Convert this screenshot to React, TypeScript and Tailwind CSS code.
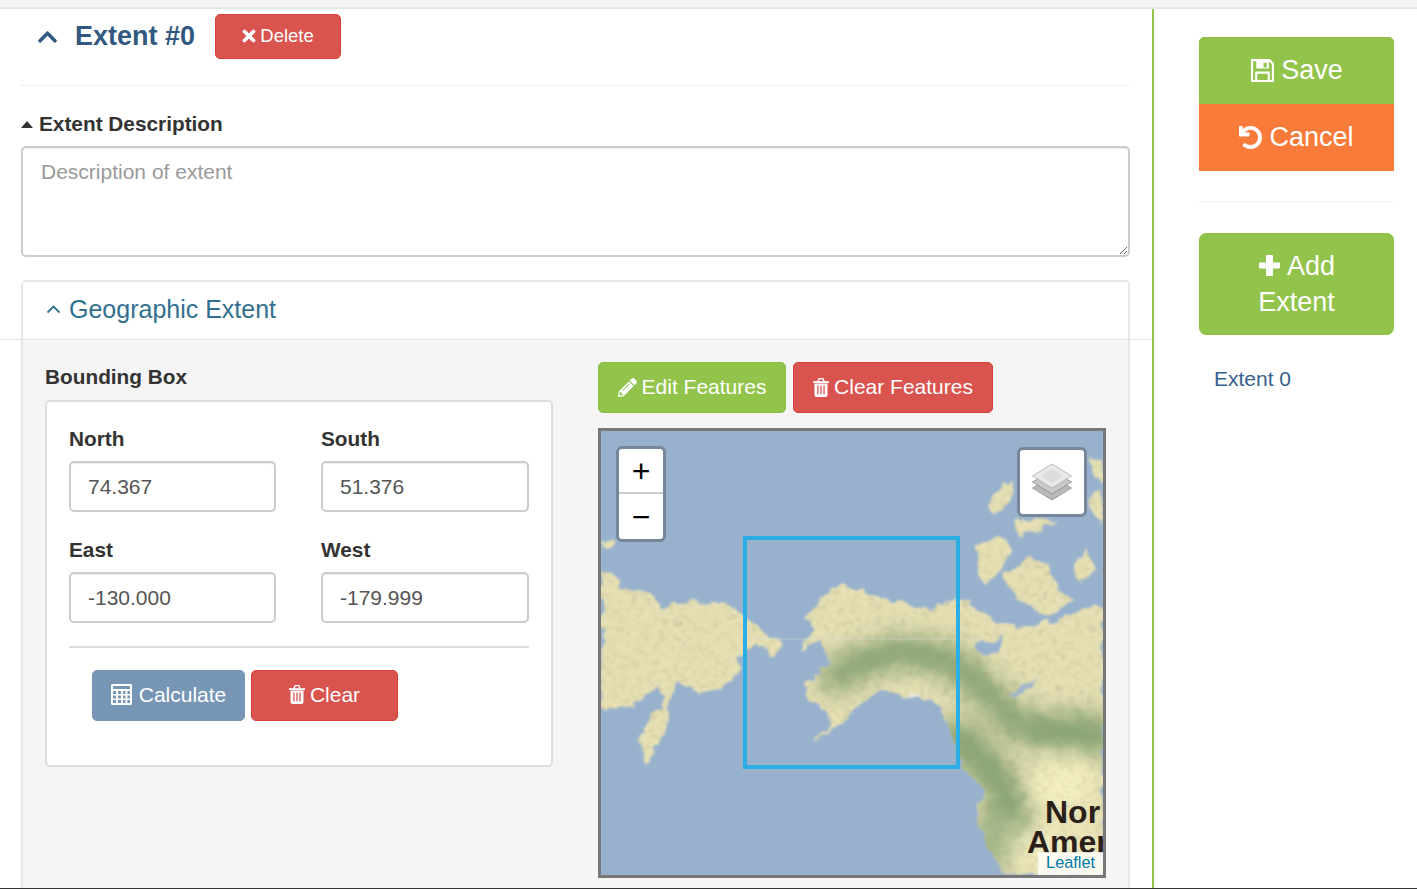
import { FaChevronUp, FaPencilAlt, FaUndo } from "react-icons/fa";

const FONT = "font-['Liberation_Sans',Arial,sans-serif]";

function CalcIcon() {
  return (
    <svg width="21" height="21" viewBox="0 0 21 21" fill="#fff" className="shrink-0">
      <path fillRule="evenodd" d="M0 1.500A1.500 1.500 0 0 1 1.500 0h18A1.500 1.500 0 0 1 21 1.500v18a1.500 1.500 0 0 1-1.500 1.500h-18A1.500 1.500 0 0 1 0 19.500zM2 2v3h17V2zM2 7v3h3V7zm5 0v3h3V7zm5 0v3h2.500V7zm4.500 0v3H19V7zM2 11.500v3h3v-3zm5 0v3h3v-3zm5 0v3h2.500v-3zm4.500 0v3H19v-3zM2 16v3h3v-3zm5 0v3h3v-3zm5 0v3h2.500v-3zm4.500 0v3H19v-3z" />
    </svg>
  );
}

function TrashIcon() {
  return (
    <svg width="16" height="19" viewBox="0 0 16 19" fill="#fff" className="shrink-0">
      <path d="M0 3.200h16v1.800H0z" />
      <path d="M4.800 3.800L5.900 1.200Q6.200.6 6.900.6h2.200Q9.800.6 10.100 1.200L11.200 3.800" fill="none" stroke="#fff" strokeWidth="1.500" />
      <path fillRule="evenodd" d="M1.500 5.500h13V17a2 2 0 0 1-2 2h-9a2 2 0 0 1-2-2zM4.300 7.500v8.800h1.300V7.500zM7.350 7.500v8.800h1.300V7.500zM10.400 7.500v8.800h1.300V7.500z" />
    </svg>
  );
}

function SaveIcon() {
  return (
    <svg width="25" height="25" viewBox="0 0 24 24" fill="#fff" className="shrink-0">
      <path fillRule="evenodd" d="M1 1H19L23 5V23H1ZM3 3V21H5V13H19V21H21V6L18 3V10H6V3ZM7 15V21H17V15ZM13 4.500H16V9H13Z" />
    </svg>
  );
}

function PlusIcon() {
  return (
    <svg width="23" height="23" viewBox="0 0 23 23" fill="#fff" className="mr-[6px] inline-block align-[-2px]">
      <path d="M9 1h5a1 1 0 0 1 1 1v6.500h6a1 1 0 0 1 1 1v4a1 1 0 0 1-1 1h-6V21a1 1 0 0 1-1 1H9a1 1 0 0 1-1-1v-6.500H2a1 1 0 0 1-1-1v-4a1 1 0 0 1 1-1h6V2a1 1 0 0 1 1-1z" />
    </svg>
  );
}

function TimesIcon() {
  return (
    <svg width="14" height="14" viewBox="0 0 14 14" className="shrink-0">
      <path d="M2.500 2.500L11.500 11.500M11.500 2.500L2.500 11.500" stroke="#fff" strokeWidth="3.800" strokeLinecap="round" />
    </svg>
  );
}

function Field({ label, value }: { label: string; value: string }) {
  return (
    <div className="flex flex-col">
      <label className="h-[24px] text-[20.800px] leading-[24px] font-bold text-[#333]">{label}</label>
      <input
        readOnly
        value={value}
        className="mt-[10px] h-[51px] w-full rounded-[5px] border-2 border-[#ccc] bg-white px-[17px] text-[21px] text-[#555] shadow-[inset_0_1px_1px_rgba(0,0,0,0.075)] outline-none"
      />
    </div>
  );
}

function LeafletMap() {
  const land =
    "M601 570L613 573L623 587L653 593L657 607L703 600L737 610L757 627L772 636L785 645L770 658L757 643L737 657L738 677L700 697L677 680L667 707L668 723L653 753L645 767L640 737L653 717L662 700L657 687L633 707L601 708Z " +
    "M802 617L823 597L842 583L873 595L907 603L930 610L953 598L970 600L990 617L1020 627L1057 620L1090 607L1103 612L1103 875L1003 875L987 847L978 820L983 790L963 767L955 745L950 722L930 700L900 695L880 690L865 700L850 713L825 737L815 744L835 722L825 712L815 705L803 687L810 677L830 663L820 640L797 650L815 630Z " +
    "M975 545L1000 537L1013 550L1000 570L985 585L978 570Z " +
    "M1005 575L1030 555L1045 565L1060 590L1075 600L1050 617L1030 610L1010 590Z " +
    "M1072 565L1088 548L1096 570L1080 582Z " +
    "M987 510L1000 488L1012 482L1010 500L995 514Z " +
    "M1013 522L1040 517L1055 520L1035 532L1018 535Z " +
    "M1088 455L1103 460L1103 485L1092 475Z " +
    "M1088 495L1103 490L1103 525L1090 515Z " +
    "M601 538L615 540L615 548L601 545Z";
  return (
    <svg viewBox="601 431 502 444" className="block h-full w-full" preserveAspectRatio="none">
      <defs>
        <clipPath id="land">
          <path d={land} />
        </clipPath>
        <filter id="blur-big" x="-20%" y="-20%" width="140%" height="140%">
          <feGaussianBlur stdDeviation="11" />
        </filter>
        <filter id="coast" x="-5%" y="-5%" width="110%" height="110%">
          <feTurbulence type="fractalNoise" baseFrequency="0.07" numOctaves="4" seed="3" result="n" />
          <feDisplacementMap in="SourceGraphic" in2="n" scale="13" xChannelSelector="R" yChannelSelector="G" />
          <feGaussianBlur stdDeviation="0.9" />
        </filter>
        <filter id="terrain" x="0" y="0" width="100%" height="100%">
          <feTurbulence type="fractalNoise" baseFrequency="0.16 0.22" numOctaves="4" seed="8" />
          <feColorMatrix values="0 0 0 0 0.32  0 0 0 0 0.30  0 0 0 0 0.18  2.200 0 0 0 -1.050" />
        </filter>
      </defs>
      <rect x="601" y="431" width="502" height="444" fill="#98b2ce" />
      <g filter="url(#coast)">
        <g clipPath="url(#land)">
          <rect x="601" y="431" width="502" height="444" fill="#e6e0b4" />
          <g filter="url(#blur-big)" fill="none" stroke="#86a373" strokeLinecap="round" strokeLinejoin="round">
            <path d="M835 678C865 655 905 645 945 660C975 672 990 700 1023 728C1050 738 1085 735 1103 740" strokeWidth="32" />
            <path d="M957 737C975 750 990 770 1005 790C1015 805 1012 825 1005 835" strokeWidth="38" />
            <path d="M985 820C982 840 990 860 998 875" strokeWidth="12" />
            <path d="M1040 720L1103 722" strokeWidth="16" />
          </g>
          <g filter="url(#blur-big)" fill="#f4f0c2">
            <ellipse cx="1062" cy="785" rx="32" ry="26" />
            <ellipse cx="1055" cy="850" rx="36" ry="20" />
            <ellipse cx="1007" cy="835" rx="8" ry="14" />
          </g>
          <rect x="601" y="431" width="502" height="444" filter="url(#terrain)" opacity="0.35" />
          <path d="M895 697L915 695L925 705L905 706Z" fill="#f0f2ee" opacity="0.7" />
        </g>
        <g fill="#98b2ce">
          <path d="M975 645L1003 637L1001 648L988 656L978 654Z" />
          <path d="M1010 693L1037 677L1030 690L1014 697Z" opacity="0.85" />
          <path d="M1018 622L1047 620L1035 628Z" opacity="0.85" />
        </g>
      </g>
      <path d="M744 639H980" stroke="#d8dcd0" strokeWidth="0.7" opacity="0.7" />
      <rect x="745" y="538" width="213" height="229" fill="none" stroke="#2aaee4" strokeWidth="4" />
    </svg>
  );
}

function LayersIcon() {
  return (
    <svg width="40" height="38" viewBox="0 0 40 38">
      <path d="M20 14L39.500 25L20 37L.5 25Z" fill="#b9b9b9" stroke="#8e8e8e" strokeWidth=".8" />
      <path d="M20 8L39.500 19L20 31L.5 19Z" fill="#c8c8c8" stroke="#8e8e8e" strokeWidth=".8" />
      <path d="M20 1L39.500 13L20 25L.5 13Z" fill="#e8e8e8" stroke="#aaa" strokeWidth=".8" />
      <path d="M20 6L31 13L20 20L9 13Z" fill="#dcdcdc" />
    </svg>
  );
}

export default function App() {
  return (
    <div className={`${FONT} flex h-[889px] w-[1417px] flex-col overflow-hidden bg-white text-[#333]`}>
      <div className="h-[9px] shrink-0 border-b-2 border-[#e7e7e7] bg-[#f5f5f5]" />
      <div className="flex min-h-0 flex-1">
        {/* Main column */}
        <div className="flex w-[1154px] shrink-0 flex-col border-r-2 border-[#92c44c] pr-[22px] pl-[21px]">
          <div className="mt-[5px] flex h-[45px] shrink-0 items-center">
            <FaChevronUp className="ml-[15px] h-[22px] w-[23px] text-[#31597f]" />
            <h2 className="ml-[16px] text-[27px] font-bold text-[#31597f]">Extent #0</h2>
            <button className="ml-[20px] flex h-[45px] w-[126px] items-center justify-center gap-[4px] rounded-[5px] border border-[#d43f3a] bg-[#d9534f] pb-[2px] text-[18.500px] text-white">
              <TimesIcon />
              Delete
            </button>
          </div>
          <div className="mt-[26px] h-px shrink-0 bg-[#eee]" />
          <div className="mt-[26px] flex h-[24px] shrink-0 items-center text-[20.800px] font-bold text-[#333]">
            <svg width="12" height="7" viewBox="0 0 12 7" className="mr-[6px]">
              <path d="M6 0L12 7H0Z" fill="#333" />
            </svg>
            Extent Description
          </div>
          <textarea
            placeholder="Description of extent"
            className="mt-[10px] h-[111px] w-full shrink-0 rounded-[5px] border-2 border-[#ccc] bg-white px-[18px] py-[10px] text-[21px] leading-[28px] text-[#555] shadow-[inset_0_1px_1px_rgba(0,0,0,0.075)] outline-none placeholder:text-[#999]"
          />
          {/* Panel */}
          <div className="mt-[23px] flex min-h-0 flex-1 flex-col rounded-t-[5px] border-x-2 border-t-2 border-[#e6e6e6]">
            <div className="relative flex h-[58px] shrink-0 items-center bg-white pb-[3px] pl-[23px] text-[25px] text-[#31708f]">
              <svg width="15" height="9" viewBox="0 0 15 9" className="mr-[8px]">
                <path d="M1.500 7.500L7.500 1.500L13.500 7.500" fill="none" stroke="#31708f" strokeWidth="1.800" />
              </svg>
              Geographic Extent
              <div className="absolute right-[-23px] bottom-0 left-[-23px] h-px bg-[#e3e3e3]" />
            </div>
            <div className="flex min-h-0 flex-1 gap-[45px] bg-[#f5f5f5] pt-[22px] pl-[22px]">
              {/* Bounding box */}
              <div className="w-[508px] shrink-0">
                <div className="h-[38px] text-[20.800px] leading-[30px] font-bold text-[#333]">Bounding Box</div>
                <div className="h-[367px] rounded-[5px] border-2 border-[#ddd] bg-white px-[22px] pt-[25px]">
                  <div className="grid grid-cols-[207px_208px] gap-x-[45px] gap-y-[26px]">
                    <Field label="North" value="74.367" />
                    <Field label="South" value="51.376" />
                    <Field label="East" value="-130.000" />
                    <Field label="West" value="-179.999" />
                  </div>
                  <div className="mt-[23px] h-[2px] bg-[#ddd]" />
                  <div className="mt-[22px] ml-[23px] flex gap-[6px]">
                    <button className="flex h-[51px] w-[153px] items-center justify-center gap-[7px] rounded-[5px] border border-[#7795b4] bg-[#7795b4] pb-[2px] text-[21px] text-white">
                      <CalcIcon />
                      Calculate
                    </button>
                    <button className="flex h-[51px] w-[147px] items-center justify-center gap-[5px] rounded-[5px] border border-[#d43f3a] bg-[#d9534f] pb-[2px] text-[21px] text-white">
                      <TrashIcon />
                      Clear
                    </button>
                  </div>
                </div>
              </div>
              {/* Map column */}
              <div className="w-[508px] shrink-0">
                <div className="flex gap-[7px]">
                  <button className="flex h-[51px] w-[188px] items-center justify-center gap-[5px] rounded-[5px] border border-[#8fc044] bg-[#92c44c] pb-[1px] text-[21px] text-white">
                    <FaPencilAlt className="h-[19px] w-[19px]" />
                    Edit Features
                  </button>
                  <button className="flex h-[51px] w-[200px] items-center justify-center gap-[5px] rounded-[5px] border border-[#d43f3a] bg-[#d9534f] pb-[1px] text-[21px] text-white">
                    <TrashIcon />
                    Clear Features
                  </button>
                </div>
                <div className="relative mt-[15px] h-[450px] overflow-hidden border-[3px] border-[#777]">
                  <LeafletMap />
                  <div className="absolute top-[15px] left-[15px] flex w-[50px] flex-col overflow-hidden rounded-[6px] border-[3px] border-[#76879a] bg-white text-black">
                    <div className="flex h-[45px] items-center justify-center border-b-2 border-[#ccc] text-[32px] leading-none">+</div>
                    <div className="flex h-[45px] items-center justify-center text-[32px] leading-none">−</div>
                  </div>
                  <div className="absolute top-[16px] right-[16px] flex h-[70px] w-[70px] items-center justify-center rounded-[6px] border-[3px] border-[#76879a] bg-white">
                    <LayersIcon />
                  </div>
                  <div className="absolute right-0 bottom-[18px] w-[76px] overflow-hidden text-[32px] leading-[30px] font-bold whitespace-nowrap text-[#2a2019]">
                    <div className="pl-[18px]">Nor</div>
                    <div>Amer</div>
                  </div>
                  <div className="absolute right-0 bottom-0 bg-white/80 px-[8px] pb-[3px] text-[16.300px] leading-[20px] text-[#0078a8]">Leaflet</div>
                </div>
              </div>
            </div>
          </div>
        </div>
        {/* Side column */}
        <div className="flex flex-1 flex-col pt-[28px] pl-[45px]">
          <div className="w-[195px]">
            <button className="flex h-[67px] w-full items-center justify-center gap-[6px] rounded-t-[5px] border border-[#8fc044] bg-[#92c44c] text-[27px] text-white">
              <SaveIcon />
              Save
            </button>
            <button className="flex h-[67px] w-full items-center justify-center gap-[7px] border border-[#f97a38] bg-[#f97b3a] text-[27px] text-white">
              <FaUndo className="h-[23px] w-[23px]" stroke="currentColor" strokeWidth={18} />
              Cancel
            </button>
            <div className="mt-[30px] h-px bg-[#f0f0f0]" />
            <button className="mt-[31px] h-[102px] w-full rounded-[7px] border border-[#8fc044] bg-[#92c44c] text-[27px] leading-[36px] text-white">
              <PlusIcon />
              Add
              <br />
              Extent
            </button>
            <div className="mt-[32px] pl-[15px] text-[21px] leading-[24px] text-[#35608c]">Extent 0</div>
          </div>
        </div>
      </div>
      <div className="h-px shrink-0 bg-[#333]" />
    </div>
  );
}
